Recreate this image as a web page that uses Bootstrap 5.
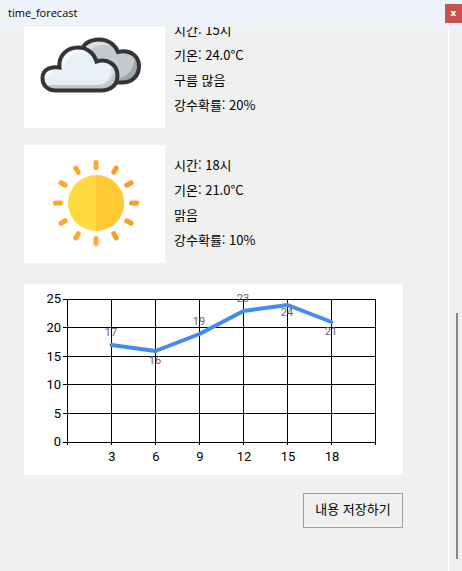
<!DOCTYPE html>
<html lang="ko">
<head>
<meta charset="utf-8">
<meta name="viewport" content="width=device-width, initial-scale=1">
<title>time_forecast</title>
<link href="https://cdn.jsdelivr.net/npm/bootstrap@5.3.0/dist/css/bootstrap.min.css" rel="stylesheet">
<style>
body { background: #f0f0f0; color: #000; font-family: "Open Sans", "Noto Sans CJK KR", sans-serif; font-size: 13px; }
.title-bar { background: #eef3fb; height: 27px; font-size: 11px; line-height: 18px; }
.close-btn { background: #c75050; width: 17px; height: 19px; font-family: "DejaVu Sans", sans-serif; font-size: 9px; font-weight: 700; line-height: 17px; }
.forecast-pane { padding: 0 45px 43px 24px; }
.forecast-item { gap: 9px; margin-bottom: 17px; }
.forecast-item.last-item { margin-bottom: 21px; }
.forecast-icon { width: 141px; height: 118px; }
.forecast-text { font-family: "Noto Sans CJK KR", sans-serif; font-size: 13px; line-height: 25px; padding-top: 7px; }
.forecast-chart { margin-bottom: 18px; }
.forecast-chart svg, .forecast-icon svg { display: block; width: 100%; height: auto; }
.axis-text { font-family: Roboto, sans-serif; font-size: 13px; fill: #000; }
.point-text { font-family: Roboto, sans-serif; font-size: 11px; fill: #666; }
.save-btn { width: 100px; height: 35px; background: #f0f0f0; border: 1px solid #a0a0a0; font-family: "Noto Sans CJK KR", sans-serif; font-size: 13px; }
.scroll-track { width: 14px; border-left: 1px solid #fff; padding-bottom: 12px; }
.scroll-thumb { width: 2px; height: 246px; background: #858585; margin-right: 4px; }
</style>
<script src="https://cdn.jsdelivr.net/npm/bootstrap@5.3.0/dist/js/bootstrap.bundle.min.js"></script>
</head>
<body class="vh-100 d-flex flex-column overflow-hidden">
<header class="title-bar d-flex justify-content-between align-items-start flex-shrink-0 pt-1 ps-2">
  <span>time_forecast</span>
  <button type="button" class="close-btn border-0 p-0 text-white" aria-label="닫기">x</button>
</header>
<div class="d-flex flex-grow-1 overflow-hidden">
  <main class="forecast-pane flex-grow-1 d-flex flex-column justify-content-end">
    <section class="forecast-item d-flex flex-shrink-0">
      <div class="forecast-icon bg-white flex-shrink-0">
        <svg viewBox="0 0 141 118" aria-hidden="true">
          <defs>
            <clipPath id="back"><path d="M58 42C58 34 66 29.500 75.500 29.500C84 29.500 91 34.500 94 42C106 39 115 46 115 56C115 66 108 72.500 98 72.500H70Z"/></clipPath>
            <clipPath id="front"><path d="M32 80.500C23 80.500 18 75 18 68C18 61 24 56 35.500 57.500C34 46 43 37.500 54 37.500C63 37.500 70 43 72.500 51.500C84 48 93.500 55 93.500 65.500C93.500 75 87 80.500 77 80.500Z"/></clipPath>
          </defs>
          <g clip-path="url(#back)">
            <path fill="#9fa6a9" d="M50 20H120V80H50Z"/>
            <path fill="#c3cace" d="M50 20H108C115 50 110 68 90 69H50Z"/>
            <path fill="#dce1e3" d="M55 44C60 30 78 26 89 36C76 33 67 37 64 43Z"/>
          </g>
          <path fill="none" stroke="#343434" stroke-width="4" stroke-linejoin="miter" d="M58 42C58 34 66 29.500 75.500 29.500C84 29.500 91 34.500 94 42C106 39 115 46 115 56C115 66 108 72.500 98 72.500H90"/>
          <g clip-path="url(#front)">
            <path fill="#bec8cf" d="M10 30H100V90H10Z"/>
            <path fill="#d3dfe6" d="M10 30H91C95 60 88 74 76 75H10Z"/>
            <path fill="#e7f2f7" d="M10 30H80C94 60 86 73 73 75H10Z"/>
            <path fill="#f6fbfd" d="M34 60C34 45 41 35 56 37L68 43C52 39 42 45 39 60C28 59 22 64 22 73L16 66C18 58 25 55 34 60Z"/>
          </g>
          <path fill="none" stroke="#343434" stroke-width="4" d="M32 80.500C23 80.500 18.500 75 18.500 68C18.500 61 24 56 35.500 57.500C34 46 43 37.500 54 37.500C63 37.500 70 43 72.500 51.500C84 48 93.500 55 93.500 65.500C93.500 75 87 80.500 77 80.500Z"/>
        </svg>
      </div>
      <div class="forecast-text">
        <div>시간: 15시</div>
        <div>기온: 24.0°C</div>
        <div>구름 많음</div>
        <div>강수확률: 20%</div>
      </div>
    </section>
    <section class="forecast-item last-item d-flex flex-shrink-0">
      <div class="forecast-icon bg-white flex-shrink-0">
        <svg viewBox="0 0 141 118" aria-hidden="true">
          <circle cx="72" cy="58" r="28" fill="#ffda40"/>
          <path fill="#ffca33" d="M72 30A28 28 0 0 1 72 86Z"/>
          <g stroke="#ffa730" stroke-width="5" stroke-linecap="round">
            <path id="ray" d="M72 17.500V22.500"/>
            <use href="#ray" transform="rotate(210 72 58)"/>
            <use href="#ray" transform="rotate(240 72 58)"/>
            <use href="#ray" transform="rotate(270 72 58)"/>
            <use href="#ray" transform="rotate(300 72 58)"/>
            <use href="#ray" transform="rotate(330 72 58)"/>
            <use href="#ray" transform="rotate(180 72 58)"/>
          </g>
          <g stroke="#ff9a26" stroke-width="5" stroke-linecap="round">
            <path d="M92.250 22.930L89.750 27.260M107.070 37.750L102.740 40.250M112.500 58H107.500M107.070 78.250L102.740 75.750M92.250 93.070L89.750 88.740"/>
          </g>
        </svg>
      </div>
      <div class="forecast-text">
        <div>시간: 18시</div>
        <div>기온: 21.0°C</div>
        <div>맑음</div>
        <div>강수확률: 10%</div>
      </div>
    </section>
    <section class="forecast-chart bg-white flex-shrink-0">
      <svg viewBox="0 0 379 191" role="img" aria-label="시간별 기온">
        <path stroke="#000" fill="none" d="M39 15.500H352M39 43.500H352M39 72.500H352M39 100.500H352M39 129.500H352M39 158.500H352M43.500 15V161M87.500 15V161M131.500 15V161M175.500 15V161M219.500 15V161M263.500 15V161M307.500 15V161M351.500 15V161"/>
        <polyline fill="none" stroke="#418cf0" stroke-width="4" stroke-linecap="round" stroke-linejoin="round" points="87.500,61 131.500,67 175.500,50 219.500,27 263.500,21 307.500,38"/>
        <g class="axis-text" text-anchor="end">
          <text x="37" y="19">25</text><text x="37" y="48">20</text><text x="37" y="77">15</text><text x="37" y="105">10</text><text x="37" y="134">5</text><text x="37" y="162">0</text>
        </g>
        <g class="axis-text" text-anchor="middle">
          <text x="88" y="177">3</text><text x="132" y="177">6</text><text x="176" y="177">9</text><text x="220" y="177">12</text><text x="264" y="177">15</text><text x="308" y="177">18</text>
        </g>
        <g class="point-text" text-anchor="middle">
          <text x="87" y="52">17</text><text x="131" y="80">16</text><text x="175" y="41">19</text><text x="219" y="18">23</text><text x="263" y="32">24</text><text x="307" y="51">21</text>
        </g>
      </svg>
    </section>
    <button type="button" class="save-btn align-self-end flex-shrink-0 px-0 pt-0 pb-1">내용 저장하기</button>
  </main>
  <div class="scroll-track d-flex flex-column justify-content-end align-items-end flex-shrink-0" aria-hidden="true">
    <div class="scroll-thumb"></div>
  </div>
</div>
</body>
</html>
